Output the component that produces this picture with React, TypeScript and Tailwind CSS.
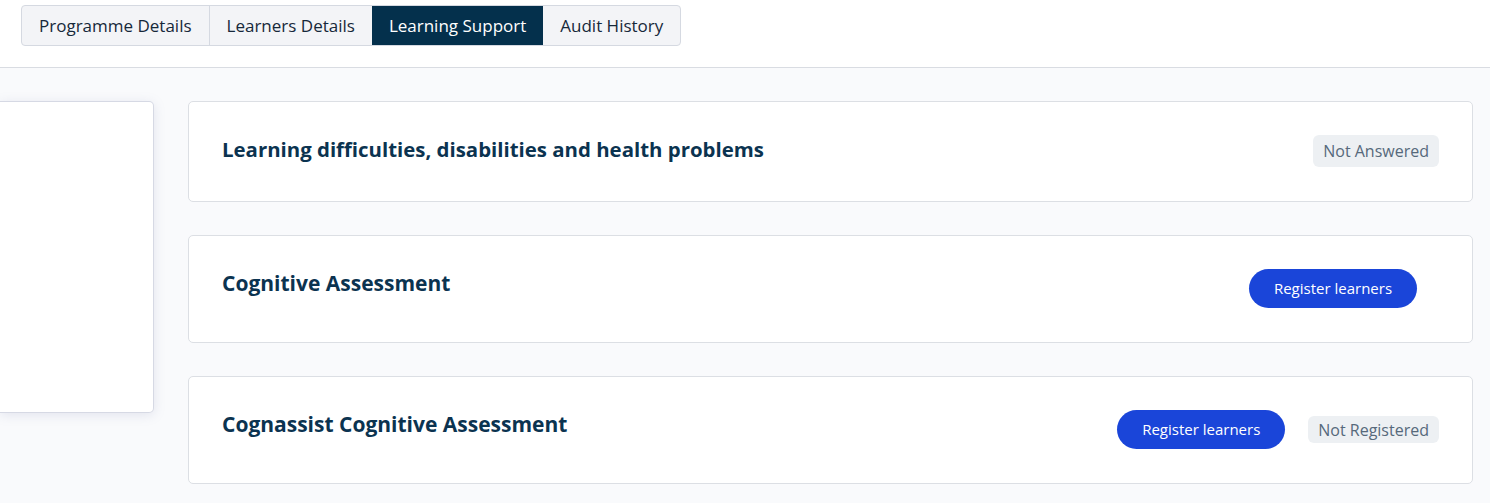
import React from 'react';

const tabs = ['Programme Details', 'Learners Details', 'Learning Support', 'Audit History'];

const Badge = ({ label, className = '' }: { label: string; className?: string }) => (
  <span className={`inline-flex items-center rounded-md bg-[#edf0f3] px-[10px] text-[16px] text-[#56697b] ${className}`}>
    {label}
  </span>
);

const RegisterButton = ({ className = '' }: { className?: string }) => (
  <button className={`h-[39px] w-[168px] rounded-full bg-[#1a45d9] text-[15px] font-medium text-white ${className}`}>
    Register learners
  </button>
);

export default function App() {
  return (
    <div className="min-h-screen bg-[#f9fafc] font-['Open_Sans',sans-serif] text-[#0b3350]">
      {/* tab bar */}
      <div className="h-[68px] border-b border-[#d9dce2] bg-white pl-[21px] pt-[5px]">
        <div className="inline-flex h-[41px] overflow-hidden rounded-[4px] border border-[#d5d9e1] bg-[#f3f4f7]">
          {tabs.map((t, i) => (
            <div
              key={t}
              className={`flex items-center px-[17px] text-[17px] ${
                t === 'Learning Support'
                  ? 'bg-[#04304c] font-medium text-white'
                  : 'text-[#16283a]'
              } ${i > 0 && t !== 'Learning Support' && tabs[i - 1] !== 'Learning Support' ? 'border-l border-[#d5d9e1]' : ''}`}
            >
              {t}
            </div>
          ))}
        </div>
      </div>

      <div className="flex gap-[34px] pr-[17px] pt-[33px]">
        <div className="h-[312px] w-[154px] shrink-0 rounded-r-[5px] border border-l-0 border-[#d6d9e4] bg-white shadow-[0_2px_12px_rgba(120,130,170,0.18)]" />

        <div className="flex flex-1 flex-col gap-[33px]">
          <div className="flex items-start justify-between rounded-[5px] border border-[#dcdfe4] bg-white p-[33px] pb-[34px]">
            <h2 className="text-[20.4px] font-bold leading-[28px]">
              Learning difficulties, disabilities and health problems
            </h2>
            <Badge label="Not Answered" className="h-[32px]" />
          </div>

          <div className="flex items-start justify-between rounded-[5px] border border-[#dcdfe4] bg-white p-[33px] pb-[34px]">
            <h2 className="text-[21px] font-bold leading-[28px]">Cognitive Assessment</h2>
            <RegisterButton className="mr-[22px]" />
          </div>

          <div className="flex items-start justify-between rounded-[5px] border border-[#dcdfe4] bg-white p-[33px] pb-[34px]">
            <h2 className="text-[21px] font-bold leading-[28px]">Cognassist Cognitive Assessment</h2>
            <div className="flex items-center gap-[23px]">
              <RegisterButton />
              <Badge label="Not Registered" className="h-[27px]" />
            </div>
          </div>
        </div>
      </div>
    </div>
  );
}
